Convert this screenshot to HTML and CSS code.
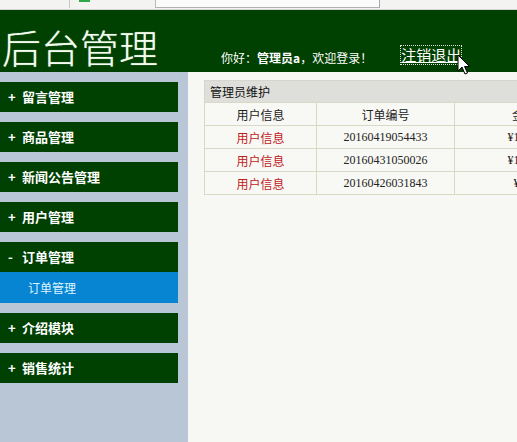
FILE: index.html
```html
<!DOCTYPE html>
<html>
<head>
<meta charset="utf-8">
<link rel="stylesheet" href="styles.css">
</head>
<body>
<div class="chrome">
  <div class="tab tab1"></div>
  <div class="tab tab2"><span class="fav"></span></div>
  <div class="tab tab3"></div>
  <div class="tab tab4"></div>
</div>
<div class="header">
  <div class="title">后台管理</div>
  <div class="greet">你好：<b>管理员a</b>，欢迎登录！</div>
  <a class="logout" href="#">注销退出</a>
  <svg class="cursor" width="14" height="22" viewBox="0 0 14 22"><path d="M1 1 L1 17 L5 13 L8 20 L10.5 19 L7.5 12.5 L12.5 12.5 Z" fill="#fff" stroke="#000" stroke-width="1"/></svg>
</div>
<div class="body">
  <div class="sidebar">
    <div class="item"><span class="sign">+</span>留言管理</div>
    <div class="item"><span class="sign">+</span>商品管理</div>
    <div class="item"><span class="sign">+</span>新闻公告管理</div>
    <div class="item"><span class="sign">+</span>用户管理</div>
    <div class="group">
      <div class="item open"><span class="sign">-</span>订单管理</div>
      <div class="sub">订单管理</div>
    </div>
    <div class="item"><span class="sign">+</span>介绍模块</div>
    <div class="item"><span class="sign">+</span>销售统计</div>
  </div>
  <div class="main">
    <div class="panel">
      <div class="ptitle">管理员维护</div>
      <table class="grid">
        <tr class="head"><td class="c1">用户信息</td><td class="c2">订单编号</td><td class="c3">金额</td></tr>
        <tr><td class="c1 red">用户信息</td><td class="c2 num">20160419054433</td><td class="c3 num">¥198.0</td></tr>
        <tr><td class="c1 red">用户信息</td><td class="c2 num">20160431050026</td><td class="c3 num">¥198.0</td></tr>
        <tr><td class="c1 red">用户信息</td><td class="c2 num">20160426031843</td><td class="c3 num">¥9.0</td></tr>
      </table>
    </div>
  </div>
</div>
</body>
</html>
```
FILE: styles.css
```css
html, body {
  margin: 0;
  padding: 0;
  width: 517px;
  height: 442px;
  overflow: hidden;
  font-family: "Noto Sans CJK SC", "DejaVu Sans", sans-serif;
}
.chrome {
  height: 10px;
  background: #f3f3f1;
  border-bottom: 1px solid #d4d4d4;
  display: flex;
  box-sizing: border-box;
}
.tab {
  height: 8px;
  box-sizing: border-box;
}
.tab1 { width: 70px; border-right: 1px solid #c8c8c8; }
.tab2 { width: 86px; border-right: 1px solid #b8b8b8; padding-left: 9px; }
.fav { display: block; width: 11px; height: 2px; background: #2fa84a; }
.tab3 {
  width: 224px;
  background: #fbfbfb;
  border-right: 1px solid #a8a8a8;
  border-bottom: 1px solid #b0b0b0;
}
.tab4 { width: 40px; }
.header {
  height: 62px;
  background: #004000;
  display: flex;
  align-items: flex-end;
  position: relative;
}
.title {
  font-size: 39px;
  line-height: 39px;
  color: #f4fbef;
  margin-left: 2px;
  padding-bottom: 6px;
  text-shadow: 0 0 1px #9fc89f;
  font-weight: 300;
}
.greet {
  font-size: 12px;
  line-height: 14px;
  color: #ffffff;
  margin-left: 63px;
  padding-bottom: 7px;
}
.greet b { font-weight: bold; }
.logout {
  font-size: 15px;
  line-height: 18px;
  color: #ffffff;
  margin-left: 29px;
  margin-bottom: 8px;
  outline: 1px dotted #e0e0e0;
  outline-offset: 0;
  text-decoration: underline;
}
.cursor {
  position: absolute;
  left: 457px;
  top: 44px;
}
.body {
  display: flex;
  height: 370px;
}
.sidebar {
  width: 188px;
  flex: none;
  background: #b8c6d6;
  padding-top: 10px;
  box-sizing: border-box;
  display: flex;
  flex-direction: column;
  gap: 10px;
}
.item {
  width: 178px;
  height: 30px;
  background: #004000;
  color: #ffffff;
  font-size: 13px;
  font-weight: bold;
  line-height: 30px;
  display: flex;
  align-items: center;
}
.sign {
  width: 22px;
  padding-left: 8px;
  box-sizing: border-box;
  font-weight: bold;
}
.sub {
  width: 178px;
  height: 31px;
  background: #0785d3;
  color: #dff4ff;
  font-size: 12px;
  line-height: 31px;
  padding-left: 28px;
  box-sizing: border-box;
}
.main {
  flex: 1;
  background: #f7f7f3;
  padding: 8px 0 0 16px;
  overflow: hidden;
}
.panel {
  width: 390px;
}
.ptitle {
  height: 22px;
  background: #dededa;
  border: 1px solid #d6d6cf;
  border-bottom: none;
  font-size: 12px;
  line-height: 22px;
  padding-left: 5px;
  color: #111;
  box-sizing: border-box;
}
.grid {
  border-collapse: collapse;
  width: 390px;
  table-layout: fixed;
  background: #f8f8f4;
}
.grid td {
  border: 1px solid #d9d9c6;
  height: 22px;
  padding: 0;
  text-align: center;
  font-size: 12px;
  color: #222;
}
.c1 { width: 111px; }
.c2 { width: 137px; }
.red { color: #c0201c !important; }
.num { font-family: "Liberation Serif", serif; font-size: 12px; color: #333; }
```
